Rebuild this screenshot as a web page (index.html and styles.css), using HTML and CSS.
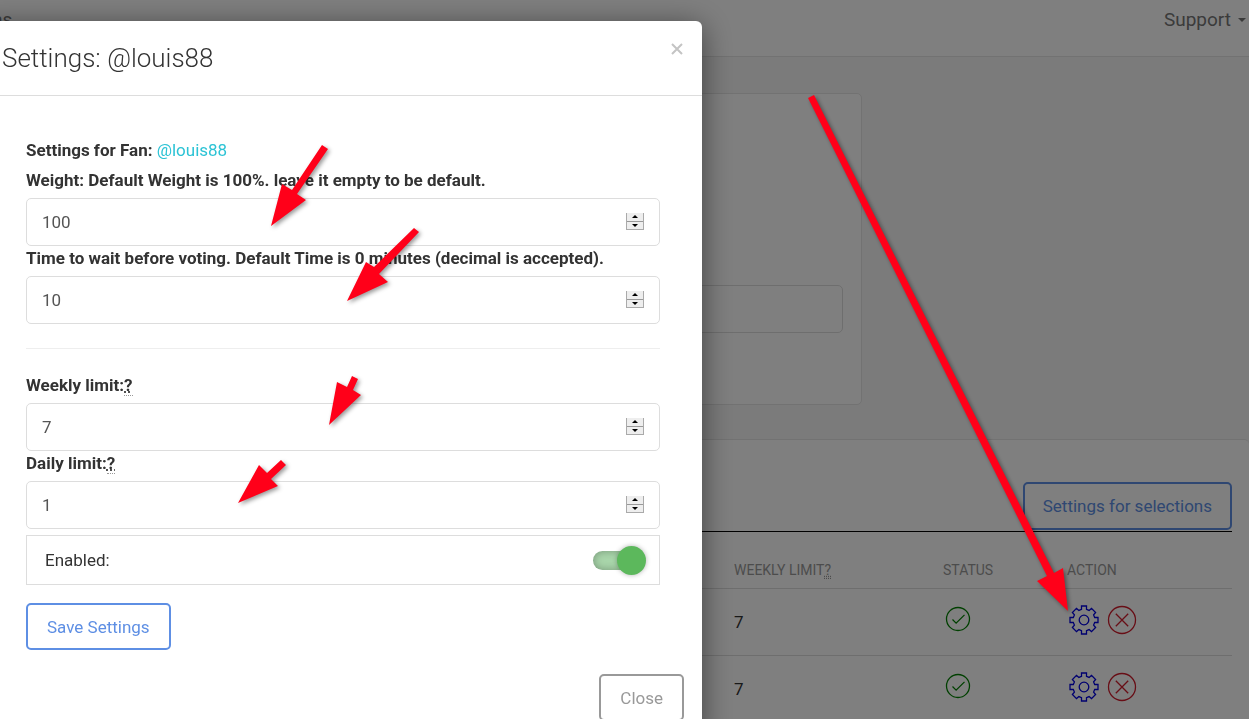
FILE: index.html
```
<!DOCTYPE html>
<html lang="en">
<head>
  <meta charset="UTF-8">
  <meta name="viewport" content="width=device-width, initial-scale=1.0">
  <title>Settings: @louis88</title>
  <link rel="stylesheet" href="styles.css">
</head>
<body>
  <svg class="sprite" aria-hidden="true">
    <symbol id="icon-check" viewBox="0 0 26 26">
      <circle cx="13" cy="13" r="11.5"/>
      <path d="M7.5 13.5l3.6 3.6 8.4-8.2"/>
    </symbol>
    <symbol id="icon-gear" viewBox="0 0 30 30">
      <path d="M12.5 1h5v3.3l2.6 1.1 2.4-2 4.1 4.100-2 2.400 1.100 2.600H29v5h-3.300l-1.100 2.600 2 2.400-4.100 4.100-2.400-2-2.600 1.100V29h-5v-3.300l-2.600-1.100-2.400 2-4.100-4.100 2-2.400-1.100-2.600H1v-5h3.300l1.100-2.600-2-2.400L7.500 3.400l2.400 2 2.600-1.100z"/>
      <circle cx="15" cy="15" r="4.800"/>
    </symbol>
    <symbol id="icon-remove" viewBox="0 0 30 30">
      <circle cx="15" cy="15" r="13.500"/>
      <path d="M8.800 8.800l12.400 12.400M21.200 8.800L8.800 21.200"/>
    </symbol>
  </svg>

  <header class="navbar">
    <a href="#" class="nav-link nav-first">ns</a>
    <a href="#" class="nav-link">Support <span class="caret"></span></a>
  </header>

  <main>
    <section class="card search-card">
      <input type="text" class="form-control" aria-label="Username">
    </section>

    <section class="card list-card">
      <div class="toolbar">
        <button type="button" class="btn btn-primary">Settings for selections</button>
      </div>
      <table class="fans">
        <colgroup>
          <col>
          <col class="col-limit">
          <col class="col-status">
          <col class="col-action">
        </colgroup>
        <thead>
          <tr>
            <td></td>
            <th>Weekly limit<abbr title="Votes per week">?</abbr></th>
            <th>Status</th>
            <th>Action</th>
          </tr>
        </thead>
        <tbody>
          <tr>
            <td></td>
            <td>7</td>
            <td><svg class="icon check"><use href="#icon-check"/></svg></td>
            <td>
              <div class="actions">
                <button type="button" aria-label="Edit"><svg class="icon gear"><use href="#icon-gear"/></svg></button>
                <button type="button" aria-label="Remove"><svg class="icon remove"><use href="#icon-remove"/></svg></button>
              </div>
            </td>
          </tr>
          <tr>
            <td></td>
            <td>7</td>
            <td><svg class="icon check"><use href="#icon-check"/></svg></td>
            <td>
              <div class="actions">
                <button type="button" aria-label="Edit"><svg class="icon gear"><use href="#icon-gear"/></svg></button>
                <button type="button" aria-label="Remove"><svg class="icon remove"><use href="#icon-remove"/></svg></button>
              </div>
            </td>
          </tr>
        </tbody>
      </table>
    </section>
  </main>

  <div class="backdrop">
    <div class="modal" role="dialog" aria-labelledby="modal-title">
      <div class="modal-header">
        <h1 id="modal-title">Settings: @louis88</h1>
        <button type="button" class="close" aria-label="Close dialog">
          <svg viewBox="0 0 12 12"><path d="M1 1l10 10M11 1L1 11"/></svg>
        </button>
      </div>

      <form class="modal-body">
        <p class="fan"><strong>Settings for Fan:</strong> <a href="#">@louis88</a></p>

        <label for="weight">Weight: Default Weight is 100%. leave it empty to be default.</label>
        <div class="number">
          <input type="number" id="weight" class="form-control" value="100">
          <span class="spinner"><i class="up"></i><i class="down"></i></span>
        </div>

        <label for="delay">Time to wait before voting. Default Time is 0 minutes (decimal is accepted).</label>
        <div class="number">
          <input type="number" id="delay" class="form-control" value="10">
          <span class="spinner"><i class="up"></i><i class="down"></i></span>
        </div>

        <hr>

        <label for="weekly">Weekly limit:<abbr title="Votes per week">?</abbr></label>
        <div class="number">
          <input type="number" id="weekly" class="form-control" value="7">
          <span class="spinner"><i class="up"></i><i class="down"></i></span>
        </div>

        <label for="daily">Daily limit:<abbr title="Votes per day">?</abbr></label>
        <div class="number">
          <input type="number" id="daily" class="form-control" value="1">
          <span class="spinner"><i class="up"></i><i class="down"></i></span>
        </div>

        <div class="switch-row">
          <label for="enabled">Enabled:</label>
          <input type="checkbox" id="enabled" class="switch" checked>
        </div>

        <button type="submit" class="btn btn-primary">Save Settings</button>
      </form>

      <div class="modal-footer">
        <button type="button" class="btn btn-default">Close</button>
      </div>
    </div>
  </div>

  <!-- arrows pointing at the fields and at the gear -->
  <svg class="arrows" width="1249" height="719" aria-hidden="true">
    <path d="M322 145L328 149L297 194L306 200L271 226L282 184L292 190Z"/>
    <path d="M414 228L419 232L379 274L388 282L347 301L366 262L374 267Z"/>
    <path d="M352 376L358 379L353 390L361 395L329 425L337 382L347 387Z"/>
    <path d="M281 460L286 465L271 479L278 486L238 503L259 465L267 473Z"/>
    <path d="M808 98L814 95L1054 573L1063 568L1068 611L1037 581L1047 576Z"/>
  </svg>
</body>
</html>
```
FILE: styles.css
```
* {
  box-sizing: border-box;
}

html, body {
  height: 100%;
  margin: 0;
  overflow: hidden;
}

body {
  font-family: Roboto, Arial, sans-serif;
  font-size: 17px;
  line-height: 24px;
  color: #333;
  background-color: #f7f7f7;
}

button, input {
  font-family: inherit;
  font-size: inherit;
}

abbr {
  text-decoration: underline dotted;
  border-bottom: 1px dotted #999;
}

.sprite {
  display: none;
}

/* Page behind the dialog */
.navbar {
  display: flex;
  justify-content: space-between;
  height: 57px;
  padding: 8px 3px 0 0;
  background-color: #fff;
  border-bottom: 1px solid #e4e4e4;
}

.nav-link {
  display: flex;
  align-items: center;
  gap: 7px;
  height: 24px;
  font-size: 19px;
  color: #777;
  text-decoration: none;
}

.nav-first {
  margin-left: -8px;
}

.caret {
  border: 4px solid transparent;
  border-top-color: #777;
  border-bottom: 0;
}

main {
  padding-top: 36px;
}

.card {
  background-color: #fff;
  border: 1px solid #e4e4e4;
  border-radius: 5px;
}

.search-card {
  width: 69%;
  margin-bottom: 34px;
  padding: 191px 18px 71px;
}

.list-card {
  padding: 42px 17px 60px;
  border-right: 0;
}

.toolbar {
  display: flex;
  justify-content: flex-end;
  padding-bottom: 1px;
  border-bottom: 1px solid #000;
}

.fans {
  width: 100%;
  table-layout: fixed;
  border-collapse: collapse;
}

.col-limit {
  width: 209px;
}

.col-status {
  width: 124px;
}

.col-action {
  width: 173px;
}

.fans th, .fans td {
  height: 67px;
  padding: 0 8px;
  text-align: left;
  border-bottom: 1px solid #ddd;
}

.fans thead th, .fans thead td {
  height: 56px;
  padding-top: 20px;
  font-size: 14px;
  font-weight: normal;
  text-transform: uppercase;
  color: #999;
}

.icon {
  display: block;
  fill: none;
  stroke-width: 1.3px;
}

.check {
  width: 26px;
  height: 26px;
  margin: 0 0 5px 2px;
  stroke: #008000;
}

.gear, .remove {
  width: 30px;
  height: 30px;
}

.gear {
  stroke: #0000e0;
}

.remove {
  stroke: #d01c2c;
}

.actions {
  display: flex;
  gap: 8px;
  margin: 0 0 4px 2px;
}

.actions button {
  padding: 0;
  background: none;
  border: 0;
  cursor: pointer;
}

/* Form parts */
.form-control {
  display: block;
  width: 100%;
  height: 48px;
  padding: 0 15px;
  color: #555;
  background-color: #fff;
  border: 1px solid #ddd;
  border-radius: 5px;
}

.btn {
  height: 48px;
  padding: 0 18px;
  background: none;
  border: 2px solid;
  border-radius: 5px;
  cursor: pointer;
}

.btn-primary {
  color: #5e8fe4;
}

.btn-default {
  color: #999;
}

/* Dialog */
.backdrop {
  position: fixed;
  inset: 0;
  overflow: hidden;
  background-color: rgba(0, 0, 0, 0.5);
}

.modal {
  width: 726px;
  margin: 21px 0 0 -24px;
  background-color: #fff;
  border-radius: 6px;
  box-shadow: 0 5px 30px rgba(0, 0, 0, 0.5);
}

.modal .btn {
  height: 47px;
  padding: 0 19px;
}

.modal-header {
  display: flex;
  justify-content: space-between;
  align-items: flex-start;
  height: 75px;
  padding: 22px 19px 0 26px;
  border-bottom: 1px solid #ddd;
}

.modal-header h1 {
  margin: 0;
  font-size: 26px;
  font-weight: 300;
  line-height: 30px;
}

.close {
  padding: 0;
  background: none;
  border: 0;
  cursor: pointer;
}

.close svg {
  display: block;
  width: 12px;
  height: 12px;
  stroke: #c4c4c4;
  stroke-width: 2px;
}

.modal-body {
  padding: 42px 42px 24px 50px;
}

.modal-body label {
  display: block;
  margin-bottom: 6px;
  font-weight: bold;
}

.fan {
  margin: 0 0 6px;
}

.fan a {
  color: #2cc3d5;
  text-decoration: none;
}

.number {
  position: relative;
}

.number input {
  appearance: textfield;
}

.number input::-webkit-inner-spin-button {
  appearance: none;
}

.spinner {
  position: absolute;
  top: 15px;
  right: 16px;
  display: flex;
  flex-direction: column;
  width: 18px;
  height: 17px;
  background-color: #eee;
  border: 1px solid #aaa;
  border-top: 0;
}

.spinner i {
  display: flex;
  justify-content: center;
  align-items: center;
  flex: 1;
}

.spinner i::before {
  content: "";
  border: 3px solid transparent;
}

.spinner .up {
  border-bottom: 1px solid #999;
}

.spinner .up::before {
  border-top: 0;
  border-bottom-color: #000;
}

.spinner .down::before {
  border-bottom: 0;
  border-top-color: #000;
}

hr {
  height: 1px;
  margin: 24px 0;
  background-color: #eee;
  border: 0;
}

.switch-row {
  display: flex;
  justify-content: space-between;
  align-items: center;
  height: 50px;
  margin: 6px 0 18px;
  padding: 0 18px;
  border: 1px solid #ddd;
}

.modal-body .switch-row label {
  margin: 0;
  font-weight: normal;
}

.switch {
  position: relative;
  appearance: none;
  width: 48px;
  height: 19px;
  margin: 0;
  background-color: #a9d6ab;
  border-radius: 10px;
  box-shadow: inset 0 0 8px rgba(0, 0, 0, 0.3);
  cursor: pointer;
}

.switch::before {
  content: "";
  position: absolute;
  top: -5px;
  right: -5px;
  width: 29px;
  height: 29px;
  background-color: #5cb85c;
  border-radius: 50%;
  box-shadow: 0 0 5px rgba(0, 0, 0, 0.3);
}

.modal-footer {
  display: flex;
  justify-content: flex-end;
  padding: 0 18px 18px;
}

.arrows {
  position: fixed;
  top: 0;
  left: 0;
  fill: #ff0019;
  filter: drop-shadow(2px 2px 2px rgba(0, 0, 0, 0.4));
  pointer-events: none;
}
```
